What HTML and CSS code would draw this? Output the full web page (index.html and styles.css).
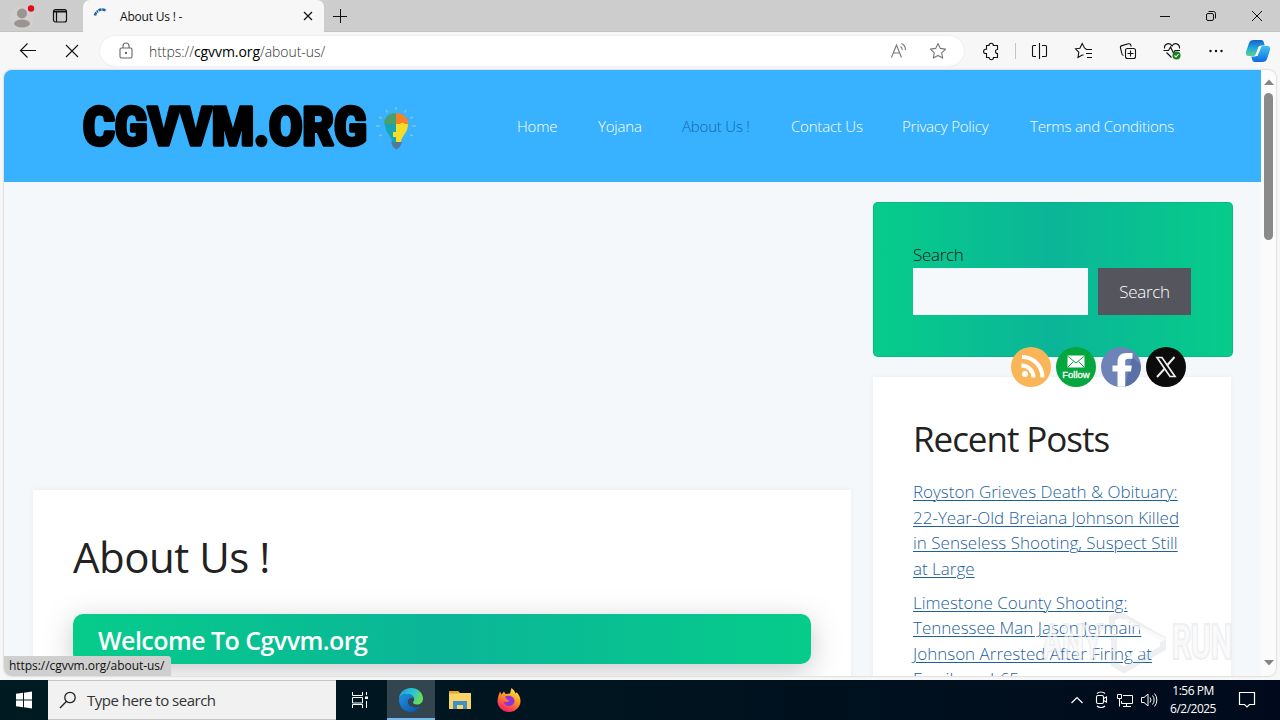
FILE: index.html
```html
<!DOCTYPE html>
<html lang="en">
<head>
    <meta charset="utf-8">
    <title>About Us ! -</title>
    <link rel="stylesheet" href="styles.css">
</head>
<body>
<!-- Tab strip -->
<div class="tabstrip">
    <svg class="profile" width="26" height="28" viewBox="0 0 26 28">
        <circle cx="13" cy="16" r="12" fill="#d2d0ce"/>
        <circle cx="13" cy="11.500" r="5" fill="#9a9592"/>
        <ellipse cx="13" cy="21.500" rx="8" ry="4" fill="#9a9592"/>
        <circle cx="22" cy="6.500" r="3.2" fill="#e00b1c"/>
    </svg>
    <svg class="workspaces" width="16" height="16" viewBox="0 0 16 16" fill="none" stroke="#111" stroke-width="1.2">
        <rect x="1.5" y="1.5" width="13" height="12.5" rx="2"/>
        <path d="M2 4h12M2 3h12M4.5 4v10"/>
    </svg>
    <div class="tab">
        <svg width="16" height="20" viewBox="0 0 16 20" fill="none" stroke="#1d63a5" stroke-width="2.6">
            <path d="M3 9.500A6 6 0 0 1 6 5.200M6.500 4.500A7 7 0 0 1 14 4.800" stroke-dasharray="3.2 .6"/>
        </svg>
        <span class="tab-title">About Us ! -</span>
        <svg width="10" height="10" viewBox="0 0 10 10" stroke="#111" stroke-width="1.2"><path d="M1 1l8 8M9 1l-8 8"/></svg>
    </div>
    <svg class="newtab" width="14" height="14" viewBox="0 0 14 14" stroke="#111"><path d="M7.5 0v14M0 7.5h14"/></svg>
    <div class="window-buttons">
        <svg width="46" height="32" viewBox="0 0 46 32" stroke="#111"><path d="M18 16.5h10"/></svg>
        <svg width="46" height="32" viewBox="0 0 46 32" fill="none" stroke="#111"><rect x="18.500" y="13.500" width="7" height="7" rx="1.500"/><path d="M20.500 11.500h5a2 2 0 0 1 2 2v5"/></svg>
        <svg width="46" height="32" viewBox="0 0 46 32" stroke="#111"><path d="M18 11l10 10M28 11l-10 10"/></svg>
    </div>
</div>

<!-- Toolbar -->
<div class="toolbar">
    <svg class="tool" viewBox="0 0 44 38"><path d="M30 18.500H14.500M21.500 11.500l-7 7 7 7"/></svg>
    <svg class="tool" viewBox="0 0 44 38"><path d="M16 13l12 12M28 13L16 25"/></svg>
    <div class="address">
        <svg width="14" height="18" viewBox="0 0 14 18" fill="none" stroke="#666" stroke-width="1.100">
            <rect x="1" y="6" width="12" height="10" rx="1.500"/>
            <path d="M4 6V4a3 3 0 0 1 6 0v2"/><circle cx="7" cy="11" r=".6" fill="#666"/>
        </svg>
        <span class="url">https://<b>cgvvm.org</b>/about-us/</span>
        <svg width="18" height="18" viewBox="0 0 18 18" fill="none" stroke="#777" stroke-width="1.100">
            <path d="M2.500 15.500L7.500 3l5 12.500M4.300 11h6.500M11.500 4.500a4 4 0 0 1 1.800 3.500M12.500 1.500A7 7 0 0 1 16.500 8"/>
        </svg>
        <svg class="star" width="18" height="18" viewBox="0 0 18 18" fill="none" stroke="#777" stroke-width="1.100" stroke-linejoin="round">
            <path d="M9 1.500l2.300 4.900 5.300.7-3.900 3.700 1 5.300L9 13.500l-4.700 2.600 1-5.300L1.400 7.100l5.300-.7z"/>
        </svg>
    </div>
    <svg class="tool" viewBox="0 0 44 38"><path d="M17.500 13.500h2.500a2.200 2.200 0 0 1 4.400 0H28.500v4a2 2 0 0 0 0 4v4H24.500a2.200 2.200 0 0 1-4.400 0H17.500v-4h-.8a2.100 2.100 0 0 1 0-4.200h.8z"/></svg>
    <div class="divider"></div>
    <svg class="tool" viewBox="0 0 44 38"><path d="M18 13.500h-2.500a1 1 0 0 0-1 1v9a1 1 0 0 0 1 1H18M24 13.500h3.500a1 1 0 0 1 1 1v9a1 1 0 0 1-1 1H24M21.500 11v16"/></svg>
    <svg class="tool" viewBox="0 0 44 38"><path d="M30 21.500h-6M30 25.500h-5M30 17.500h-5.500L22.500 16l-2.300-4.500-2.300 4.700-4.400.6 3.300 3.400-.8 5.300 4.200-2.500h1.500"/></svg>
    <svg class="tool" viewBox="0 0 44 38"><rect x="19.500" y="16.500" width="10" height="10" rx="2"/><path d="M24.500 18.500v6M21.500 21.500h6M17.500 23.500a2 2 0 0 1-1.500-1.500l-1.500-6a2 2 0 0 1 1.400-2.400l6.500-1.800a2 2 0 0 1 2.500 1.500l.3 1.200"/></svg>
    <svg class="tool" viewBox="0 0 44 38"><path d="M14.500 16.500c-.5-5 5.500-6.500 7.500-2.500 2-4 8-2.500 7.500 2.500M13.500 18.500h5l2-3.500 3 6 1.500-2.500h5M16.500 20.500l5 5"/><circle cx="26.500" cy="23.500" r="4" fill="#14801c" stroke="none"/><path d="M24.500 23.500l1.500 1.500 2.500-2.800" stroke="#fff"/></svg>
    <svg class="tool" viewBox="0 0 44 38"><g fill="#111" stroke="none"><circle cx="16.500" cy="19" r="1.200"/><circle cx="22" cy="19" r="1.200"/><circle cx="27.500" cy="19" r="1.200"/></g></svg>
    <svg class="copilot" width="26" height="24" viewBox="0 0 26 24">
        <defs>
            <linearGradient id="cp1" x1="0" y1="0" x2="0" y2="1"><stop offset="0" stop-color="#1560c8"/><stop offset=".5" stop-color="#22a6e0"/><stop offset="1" stop-color="#5fd28c"/></linearGradient>
            <linearGradient id="cp2" x1="0" y1="0" x2="0" y2="1"><stop offset="0" stop-color="#3fc3f5"/><stop offset="1" stop-color="#0f6be0"/></linearGradient>
        </defs>
        <path d="M9 1h7c2 0 2.500 1 3 3l.7 2.500h-3.200c-2 0-3 1-3.600 3L11 15c-.6 1.500-1.500 2-3 2H4c-3 0-3.500-2-2.800-4.500l2.600-8C4.600 2 6 1 9 1z" fill="url(#cp1)"/>
        <path d="M17 23h-7c-2 0-2.500-1-3-3l-.7-2.500h3.200c2 0 3-1 3.600-3L15 9c.6-1.500 1.500-2 3-2h4c3 0 3.500 2 2.800 4.500l-2.600 8C21.400 22 20 23 17 23z" fill="url(#cp2)"/>
        <path d="M14 7.500h2.500L12.500 17H10z" fill="#f7f7f7"/>
    </svg>
</div>

<!-- Page -->
<div class="viewport">
    <div class="page">
        <header class="site-header">
            <svg class="logo" width="350" height="64" viewBox="0 0 350 64">
                <text class="logo-text" x="9" y="50.500" textLength="284" lengthAdjust="spacingAndGlyphs">CGVVM.ORG</text>
                <g stroke="#8fd4c4" stroke-width="1.200"><path d="M322 13v3M312 16l1.500 2.500M332 16l-1.500 2.500M305 23l3 1.500M339 23l-3 1.500M302 32h4M338 32h4M305 42l3-1.500M339 42l-3-1.500"/></g>
                <path d="M322 19v13h-11c-3-7 3-13 11-13z" fill="#4aa06c"/>
                <path d="M322 19c8 0 14 6 12 13h-12z" fill="#f5822b"/>
                <path d="M311 30h11v18h-4c-1-7-7-9-7-18z" fill="#16a5b5"/>
                <path d="M322 30h4a3 3 0 0 1 5 0h3c0 9-6 11-7 18h-5v-5h-3v-5h3z" fill="#f4dc29"/>
                <path d="M317 48h11l-2 5-3.500 2.500-3.500-2.500z" fill="#51799b"/>
            </svg>
            <nav class="main-nav">
                <a>Home</a>
                <a>Yojana</a>
                <a class="current">About Us !</a>
                <a>Contact Us</a>
                <a>Privacy Policy</a>
                <a>Terms and Conditions</a>
            </nav>
        </header>
        <div class="content">
            <article class="entry">
                <h1>About Us !</h1>
                <h2 class="banner"><span>Welcome To Cgvvm.org</span></h2>
            </article>
            <aside class="sidebar">
                <div class="widget search-widget">
                    <label class="search-label">Search</label>
                    <div class="search-row">
                        <input class="search-input" type="text">
                        <button class="search-button">Search</button>
                    </div>
                </div>
                <div class="widget posts">
                    <h2>Recent Posts</h2>
                    <ul>
                        <li><a>Royston Grieves Death &amp; Obituary:<br>22-Year-Old Breiana Johnson Killed<br>in Senseless Shooting, Suspect Still<br>at Large</a></li>
                        <li><a>Limestone County Shooting:<br>Tennessee Man Jason Jermain<br>Johnson Arrested After Firing at<br>Family on I-65</a></li>
                    </ul>
                </div>
            </aside>
        </div>
    </div>
    <div class="scrollbar">
        <svg width="10" height="6" viewBox="0 0 10 6"><path d="M0 6l5-5.500L10 6z" fill="#858585"/></svg>
        <div class="thumb"></div>
        <svg width="10" height="6" viewBox="0 0 10 6"><path d="M0 0l5 5.500L10 0z" fill="#858585"/></svg>
    </div>
    <div class="status">https://cgvvm.org/about-us/</div>

    <!-- Floating follow icons -->
    <div class="social">
        <svg width="40" height="40" viewBox="0 0 40 40"><circle cx="20" cy="20" r="20" fill="#fbb559"/><circle cx="14" cy="27" r="3" fill="#fff"/><path d="M10.500 18.500a12 12 0 0 1 12 12M11 10a20.500 20.500 0 0 1 20.500 20.500" fill="none" stroke="#fff" stroke-width="4"/></svg>
        <svg width="40" height="40" viewBox="0 0 40 40"><circle cx="20" cy="20" r="20" fill="#05a63d"/><rect x="11.500" y="8.500" width="17" height="12" fill="#fff"/><path d="M11.500 9l8.500 7 8.500-7M11.500 20.500l6-6M28.500 20.500l-6-6" fill="none" stroke="#05a63d"/><text class="follow" x="20" y="31" text-anchor="middle">Follow</text></svg>
        <svg width="40" height="40" viewBox="0 0 40 40"><circle cx="20" cy="20" r="20" fill="#6e83b7"/><path d="M31 9l8.500 9A20 20 0 0 1 24 39.500z" fill="#5a6fa5"/><path d="M16.500 39.700V24.500h-5v-6h5V15c0-6 3.500-9 9-9h6v5.800H27c-2 0-2.800 1-2.800 3v3.700h6.600l-.8 6h-5.800v15.200z" fill="#fff"/></svg>
        <svg width="40" height="40" viewBox="0 0 40 40"><circle cx="20" cy="20" r="20" fill="#0b0b0b"/><path d="M11 10.500h5l13 19h-5z" fill="none" stroke="#eee" stroke-width="1.700"/><path d="M28.500 10l-7.500 8.500M18.800 21.500L11 30" stroke="#eee" stroke-width="2"/></svg>
    </div>

    <svg class="watermark" width="200" height="64" viewBox="0 0 200 64">
        <g class="wm-text">
            <text x="2" y="48" textLength="60" lengthAdjust="spacingAndGlyphs">ANY</text>
            <text x="132" y="48" textLength="60" lengthAdjust="spacingAndGlyphs">RUN</text>
        </g>
        <path d="M72 20V8l9-3 42 24v9L84 60l-10-6V24" fill="none" stroke="#b0b6bc" stroke-opacity=".22" stroke-width="6"/>
        <path d="M84 10l38 19-34 18" fill="none" stroke="#fff" stroke-opacity=".7" stroke-width="4"/>
    </svg>
</div>

<!-- Windows taskbar -->
<div class="taskbar">
    <svg class="start" width="48" height="40" viewBox="0 0 48 40" fill="#fff"><path d="M16 13.800l7-1v6.700h-7zM24 12.700l8-1.200v8h-8zM16 20.500h7v6.700l-7-1zM24 20.500h8v8l-8-1.200z"/></svg>
    <div class="taskbar-search">
        <svg width="18" height="18" viewBox="0 0 18 18" fill="none" stroke="#222" stroke-width="1.300"><circle cx="11" cy="6.500" r="5.200"/><path d="M7.300 10.500L1 17"/></svg>
        <span>Type here to search</span>
    </div>
    <svg width="51" height="40" viewBox="0 0 51 40" fill="none" stroke="#fff"><path d="M16.500 12v3.500h10V12M16.500 28v-3.500h10V28M16.500 17.500h10v5.500h-10zM30.500 12v3M30.500 21v7"/><rect x="29" y="16.500" width="3" height="2.500" fill="#fff" stroke="none"/></svg>
    <div class="task active">
        <svg width="24" height="24" viewBox="0 0 24 24">
            <defs>
                <linearGradient id="e1" x1="0" y1="0" x2="1" y2=".4"><stop offset="0" stop-color="#1a9be0"/><stop offset=".6" stop-color="#2cc5d2"/><stop offset="1" stop-color="#68dd5b"/></linearGradient>
                <linearGradient id="e2" x1="0" y1="0" x2="1" y2="1"><stop offset="0" stop-color="#1f94e3"/><stop offset="1" stop-color="#0b4fa5"/></linearGradient>
            </defs>
            <path d="M0 11C0 5 5 0 12 0s12 5 12 10.500c0 4-3 6-6 6-2.500 0-4-1-4-2 0-.8 1.200-1.200 1.200-3.200C15.200 8.500 12 6 8 6 4 6 1 8 0 11z" fill="url(#e1)"/>
            <path d="M0 12C.3 8.500 4 6 8 6c4 0 7 2 7 5-1-1.500-5-1.500-6 1.500-1.200 4.500 4 9 12 6C18.500 22.500 15.500 24 12 24 5 24 0 18.500 0 12z" fill="url(#e2)"/>
        </svg>
    </div>
    <div class="task">
        <svg width="22" height="20" viewBox="0 0 22 20"><path d="M0 1h9l2 2h11v16H0z" fill="#fbd469"/><path d="M0 1h9l1.500 2.500H0z" fill="#e8a425"/><path d="M4 11h14v8h-4v-4H8v4H4z" fill="#3f8fca"/></svg>
    </div>
    <div class="task">
        <svg width="24" height="24" viewBox="0 0 24 24">
            <defs><linearGradient id="ff" x1=".8" y1="0" x2=".3" y2="1"><stop offset="0" stop-color="#fff14a"/><stop offset=".45" stop-color="#ff9322"/><stop offset="1" stop-color="#f5156c"/></linearGradient></defs>
            <path d="M3 3.500l1.500 3L7 3.500 8.500 6 13 5.500 14.500 0c2 1.500 3.500 3.500 4 5.500l1.200-1.200C22 7 23.500 9.500 23.500 13c0 6-5 11-11.500 11S.5 19 .5 13C.5 9 2 6.500 3 3.500z" fill="url(#ff)"/>
            <path d="M8 8.500c4-2 9 0 9.500 4 .2 3.500-2.500 5.500-5.500 5.500-3.500 0-5-2.500-5-4.500 2 1.500 4 .5 5.500-1-2-.5-4-2-4.500-4z" fill="#8a35dc"/>
        </svg>
    </div>
    <div class="tray">
        <svg width="24" height="40" viewBox="0 0 24 40" fill="none" stroke="#fff" stroke-width="1.200"><path d="M6.500 23l5.500-5.500 5.500 5.500"/></svg>
        <svg width="24" height="40" viewBox="0 0 24 40" fill="none" stroke="#fff" stroke-width="1.100"><rect x="7.500" y="15.500" width="7" height="8" rx="1.500"/><path d="M14.500 18.500l3-1.500v5l-3-1.500M8 13.500c2-2 6-2 8 0M8 26c2 2 6 2 8 0"/></svg>
        <svg width="24" height="40" viewBox="0 0 24 40" fill="none" stroke="#fff"><path d="M10 15.500h9.500v8h-11V21M13.500 23.500v3M10 26.500h8M4.500 14.500h4v4h-4zM6.500 18.500v8"/></svg>
        <svg width="24" height="40" viewBox="0 0 24 40" fill="none" stroke="#fff"><path d="M4.500 17.500h2.500l4-3.500v12l-4-3.500H4.500zM13 17.500a4 4 0 0 1 0 5M15.500 15.500a7 7 0 0 1 0 9M17.500 13.500a10 10 0 0 1 0 13"/></svg>
        <div class="clock"><span>1:56 PM</span><span>6/2/2025</span></div>
        <svg width="44" height="40" viewBox="2 0 44 40" fill="none" stroke="#fff" stroke-width="1.200"><path d="M16.500 12.500h15v12h-5l-2.500 2.500-2.500-2.500h-5z"/></svg>
    </div>
</div>
</body>
</html>
```
FILE: styles.css
```css
* {
    box-sizing: border-box;
}

body {
    margin: 0;
    width: 1280px;
    height: 720px;
    overflow: hidden;
    display: flex;
    flex-direction: column;
    background: #f7f7f7;
    font-family: "Open Sans", "Noto Sans", sans-serif;
    color: #111;
}

svg {
    display: block;
    flex: none;
}

/* tab strip */
.tabstrip {
    height: 32px;
    flex: none;
    display: flex;
    align-items: center;
    background: #cdcdcd;
    box-shadow: inset 0 -1px #c2c2c2;
}

.profile {
    margin-left: 9px;
}

.workspaces {
    margin-left: 17px;
}

.tab {
    width: 241px;
    height: 32px;
    margin-left: 15px;
    padding: 0 11px 0 9px;
    display: flex;
    align-items: center;
    background: #f7f7f7;
    border-radius: 7px 7px 0 0;
}

.tab-title {
    flex: 1;
    margin-left: 12px;
    font-size: 12px;
    letter-spacing: -.2px;
}

.newtab {
    margin-left: 9px;
}

.window-buttons {
    display: flex;
    margin-left: auto;
}

/* toolbar */
.toolbar {
    height: 38px;
    flex: none;
    display: flex;
    align-items: center;
    padding-left: 6px;
}

.tool {
    width: 44px;
    height: 38px;
    fill: none;
    stroke: #111;
    stroke-width: 1.1;
}

.address {
    width: 864px;
    height: 30px;
    margin: 0 5px 0 6px;
    padding: 0 17px 0 19px;
    display: flex;
    align-items: center;
    background: #fff;
    border-radius: 15px;
    box-shadow: 0 0 2px #ddd;
}

.url {
    flex: 1;
    margin-left: 16px;
    font-size: 14px;
    font-weight: 300;
    letter-spacing: -.06px;
    color: #333;
}

.url b {
    font-weight: 400;
    color: #000;
}

.star {
    margin-left: 22px;
}

.divider {
    width: 1px;
    height: 16px;
    margin: 0 2px;
    background: #c4c4c4;
}

.copilot {
    margin-left: 7px;
}

/* web page */
.viewport {
    position: relative;
    width: 1272px;
    height: 606px;
    flex: none;
    margin: 0 4px 4px;
    display: flex;
    overflow: hidden;
    border-radius: 8px;
    box-shadow: 0 0 2px #aaa;
}

.page {
    width: 1257px;
    height: 606px;
    overflow: hidden;
    background: #f5f8fa;
}

.site-header {
    height: 112px;
    display: flex;
    align-items: center;
    padding-left: 70px;
    background: #38b2ff;
}

.logo-text {
    font: 900 54px Roboto, sans-serif;
    stroke: #000;
    stroke-width: 3.5px;
    stroke-linejoin: round;
}

.main-nav {
    display: grid;
    grid-template-columns: 81px 84px 109px 111px 128px 150px;
    margin-left: 93px;
    font-size: 15px;
    font-weight: 300;
    letter-spacing: -.2px;
    color: #fff;
    white-space: nowrap;
}

.main-nav .current {
    color: #1368a8;
}

.content {
    display: flex;
    align-items: flex-start;
    padding: 20px 28px 0 29px;
}

.entry {
    width: 818px;
    height: 300px;
    margin-top: 288px;
    padding: 40px;
    background: #fff;
    box-shadow: 0 0 5px #eaecef;
}

h1,
h2 {
    margin: 0;
    font-weight: 400;
    color: #222;
    white-space: nowrap;
}

h1 {
    font-size: 42px;
    line-height: 54px;
    letter-spacing: -.5px;
}

.banner {
    height: 50px;
    margin-top: 30px;
    padding-left: 25px;
    border-radius: 10px;
    background: linear-gradient(90deg, #06cc8a, #0bb598 50%, #06cc8a);
    box-shadow: 0 7px 29px rgba(100, 100, 111, .35);
    color: #fff;
    font-size: 25px;
    font-weight: 600;
    line-height: 52px;
    letter-spacing: -.55px;
}

.sidebar {
    width: 360px;
    margin-left: 22px;
    font-size: 17px;
    font-weight: 300;
    line-height: 25.5px;
}

.widget {
    padding: 40px;
}

.search-widget {
    height: 155px;
    margin-bottom: 20px;
    border-radius: 5px;
    background: linear-gradient(90deg, #06cc8a, #0bb598 50%, #06cc8a);
    box-shadow: inset 0 0 0 1px rgba(0, 160, 110, .3);
}

.search-label {
    display: block;
    height: 26px;
    color: #111;
    letter-spacing: -.3px;
}

.search-row {
    display: flex;
    gap: 10px;
}

.search-input {
    width: 175px;
    height: 47px;
    border: 0;
    background: #f6f9fc;
}

.search-button {
    width: 93px;
    height: 47px;
    padding: 0;
    border: 0;
    background: #55555e;
    color: #fff;
    font: inherit;
    letter-spacing: -.3px;
}

.posts {
    width: 358px;
    height: 340px;
    background: #fff;
    box-shadow: 0 0 5px #eaecef;
}

.posts h2 {
    margin-bottom: 18px;
    font-size: 35px;
    line-height: 44px;
    letter-spacing: -1.05px;
}

.posts ul {
    margin: 0;
    padding: 0;
    list-style: none;
    white-space: nowrap;
}

.posts li {
    margin-bottom: 8.5px;
}

.posts a {
    color: #1e5f9e;
    text-decoration: underline;
    text-decoration-thickness: 1px;
    text-underline-offset: 2px;
}

.scrollbar {
    width: 15px;
    display: flex;
    flex-direction: column;
    align-items: center;
    padding: 9px 0 10px;
    background: #fbfbfb;
}

.thumb {
    width: 9px;
    height: 147px;
    margin: 8px 0 auto;
    border-radius: 5px;
    background: #8a8a8a;
}

.status {
    position: absolute;
    left: 0;
    bottom: 0;
    width: 167px;
    height: 20px;
    padding-left: 5px;
    background: #cfcfcf;
    border-radius: 0 3px 0 6px;
    font-size: 12px;
    line-height: 20px;
    letter-spacing: -.05px;
    white-space: nowrap;
}

.social {
    position: absolute;
    left: 1007px;
    top: 277px;
    display: flex;
    gap: 5px;
}

.follow {
    font: 9.5px "Liberation Sans", sans-serif;
    fill: #fff;
    stroke: #fff;
    stroke-width: .3px;
}

.watermark {
    position: absolute;
    left: 1036px;
    top: 540px;
}

.wm-text {
    font: 500 46px Roboto, sans-serif;
    fill: rgba(255, 255, 255, .6);
    stroke: rgba(150, 155, 160, .18);
    stroke-width: 4px;
    paint-order: stroke;
}

/* taskbar */
.taskbar {
    height: 40px;
    flex: none;
    display: flex;
    background: linear-gradient(90deg, #001a22, #00141f 50%, #000a1c);
    color: #fff;
}

.taskbar-search {
    width: 288px;
    display: flex;
    align-items: center;
    padding-left: 11px;
    gap: 10px;
    background: #f1f1f1;
    border: 1px solid #c4c4c4;
    border-width: 1px 0;
    color: #333;
    font-size: 15px;
    letter-spacing: -.5px;
}

.task {
    width: 49px;
    display: flex;
    align-items: center;
    justify-content: center;
}

.active {
    width: 48px;
    background: #33454e;
    box-shadow: inset 0 -2px #76b9ed;
}

.tray {
    display: flex;
    margin-left: auto;
    padding-right: 11px;
}

.clock {
    width: 64px;
    display: flex;
    flex-direction: column;
    justify-content: center;
    align-items: center;
    font-size: 12px;
    line-height: 18px;
    letter-spacing: -.5px;
}
```
